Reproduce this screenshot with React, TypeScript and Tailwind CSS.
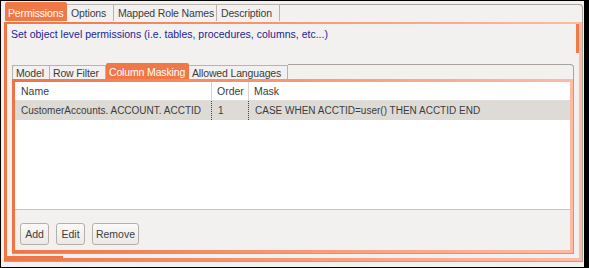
import React from 'react';

const FONT = "font-['Liberation_Sans',Arial,sans-serif] text-[10.5px] leading-[12px] whitespace-nowrap";

interface TabProps {
  label: string;
  active?: boolean;
  width: string;
  first?: boolean;
}

function OuterTab({ label, active, width, first }: TabProps) {
  if (active) {
    return (
      <div className={`${width} h-[19px] shrink-0 rounded-t-[2px] bg-[#f07746] text-white flex items-center pt-[2px] pl-[3px] tracking-[-0.15px]`}>
        {label}
      </div>
    );
  }
  return (
    <div
      className={`${width} h-[17px] shrink-0 border-t border-r border-[#b9b3ab] ${first ? 'border-l' : ''} bg-[#f2f1f0] text-[#3c3c3c] flex items-center pl-[4px] tracking-[-0.15px]`}
    >
      {label}
    </div>
  );
}

function InnerTab({ label, active, width, first }: TabProps) {
  if (active) {
    return (
      <div className={`${width} h-[16px] shrink-0 rounded-t-[2px] bg-[#f07746] text-white flex items-center pt-[1px] pl-[3px] tracking-[-0.15px]`}>
        {label}
      </div>
    );
  }
  return (
    <div
      className={`${width} h-[14px] shrink-0 border-t border-r border-[#b9b3ab] ${first ? 'border-l' : ''} bg-[#f2f1f0] text-[#3c3c3c] flex items-center pl-[3px] tracking-[-0.15px]`}
    >
      {label}
    </div>
  );
}

function Button({ label, width }: { label: string; width: string }) {
  return (
    <button
      className={`${width} h-[22px] rounded-[3px] border border-[#b6afa7] bg-gradient-to-b from-[#fbfaf9] to-[#ebe9e6] text-[#3c3c3c] flex items-center justify-center`}
    >
      {label}
    </button>
  );
}

export default function App() {
  return (
    <div className={`${FONT} w-[589px] h-[268px] bg-[#f2f1f0] border-t border-l border-b border-r-[5px] border-black pl-[3px] pt-[1px]`}>
      <div className="w-[579px] flex flex-col">
        {/* outer tab bar */}
        <div className="flex items-end h-[19px]">
          <div className="w-[1px] shrink-0" />
          <OuterTab label="Permissions" active width="w-[62px]" />
          <OuterTab label="Options" width="w-[47px]" />
          <OuterTab label="Mapped Role Names" width="w-[103px]" />
          <OuterTab label="Description" width="w-[63px]" />
          <div className="flex-1 h-[17px] border-t border-r border-[#aaa49c] rounded-tr-[4px]" />
        </div>

        {/* outer pane */}
        <div className="pt-[1px] border-r border-b border-[#aaa49c]">
          <div className="bg-gradient-to-r from-[#ef7444] to-[#fdbba3] pl-[3px] pt-[2px] pr-[3px] pb-[3px]">
            <div className="bg-[#f2f1f0] flex flex-col">
              <div className="h-[39px] flex items-start">
                <div className="pl-[4px] pt-[4px] text-[#1d1d96]">
                  Set object level permissions (i.e. tables, procedures, columns, etc...)
                </div>
                <div className="ml-auto w-[3px] h-[29px] bg-[#ef7a4a]" />
              </div>

              {/* inner tab widget */}
              <div className="ml-[5px] w-[562px] flex flex-col">
                <div className="flex items-end h-[16px]">
                  <InnerTab label="Model" first width="w-[38px]" />
                  <InnerTab label="Row Filter" width="w-[56px]" />
                  <InnerTab label="Column Masking" active width="w-[83px]" />
                  <InnerTab label="Allowed Languages" width="w-[99px]" />
                  <div className="flex-1 h-[15px] border-t border-r border-[#aaa49c] rounded-tr-[4px]" />
                </div>

                <div className="border-r border-b border-[#aaa49c]">
                  <div className="bg-gradient-to-r from-[#ef7444] to-[#fdbba3] pl-[3px] pt-[3px] pr-[3px] pb-[3px]">
                    <div className="bg-[#f2f1f0] flex flex-col">
                      {/* table */}
                      <div className="h-[128px] bg-white border-b border-[#c9c3bc] text-[#3c3c3c]">
                        <div className="flex h-[19px] border-b border-[#e2dfdb]">
                          <div className="w-[196px] pl-[6px] flex items-center">Name</div>
                          <div className="w-[37px] pl-[5px] flex items-center border-l border-[#d9d5d0]">Order</div>
                          <div className="flex-1 pl-[5px] flex items-center border-l border-[#d9d5d0]">Mask</div>
                        </div>
                        <div className="flex h-[19px] bg-[#dedbd7] text-[10px]">
                          <div className="w-[196px] pl-[6px] flex items-center overflow-hidden">CustomerAccounts. ACCOUNT. ACCTID</div>
                          <div className="w-[37px] pl-[6px] flex items-center border-l border-dotted border-[#444]">1</div>
                          <div className="flex-1 pl-[6px] flex items-center border-l border-dotted border-[#444]">
                            CASE WHEN ACCTID=user() THEN ACCTID END
                          </div>
                        </div>
                      </div>

                      {/* buttons */}
                      <div className="flex gap-[7px] pl-[5px] pt-[13px] pb-[5px]">
                        <Button label="Add" width="w-[29px]" />
                        <Button label="Edit" width="w-[29px]" />
                        <Button label="Remove" width="w-[47px]" />
                      </div>
                    </div>
                  </div>
                </div>
              </div>

              <div className="h-[2px]" />
              <div className="h-[2px] w-[56px] bg-[#ef7444]" />
            </div>
          </div>
        </div>
      </div>
    </div>
  );
}
